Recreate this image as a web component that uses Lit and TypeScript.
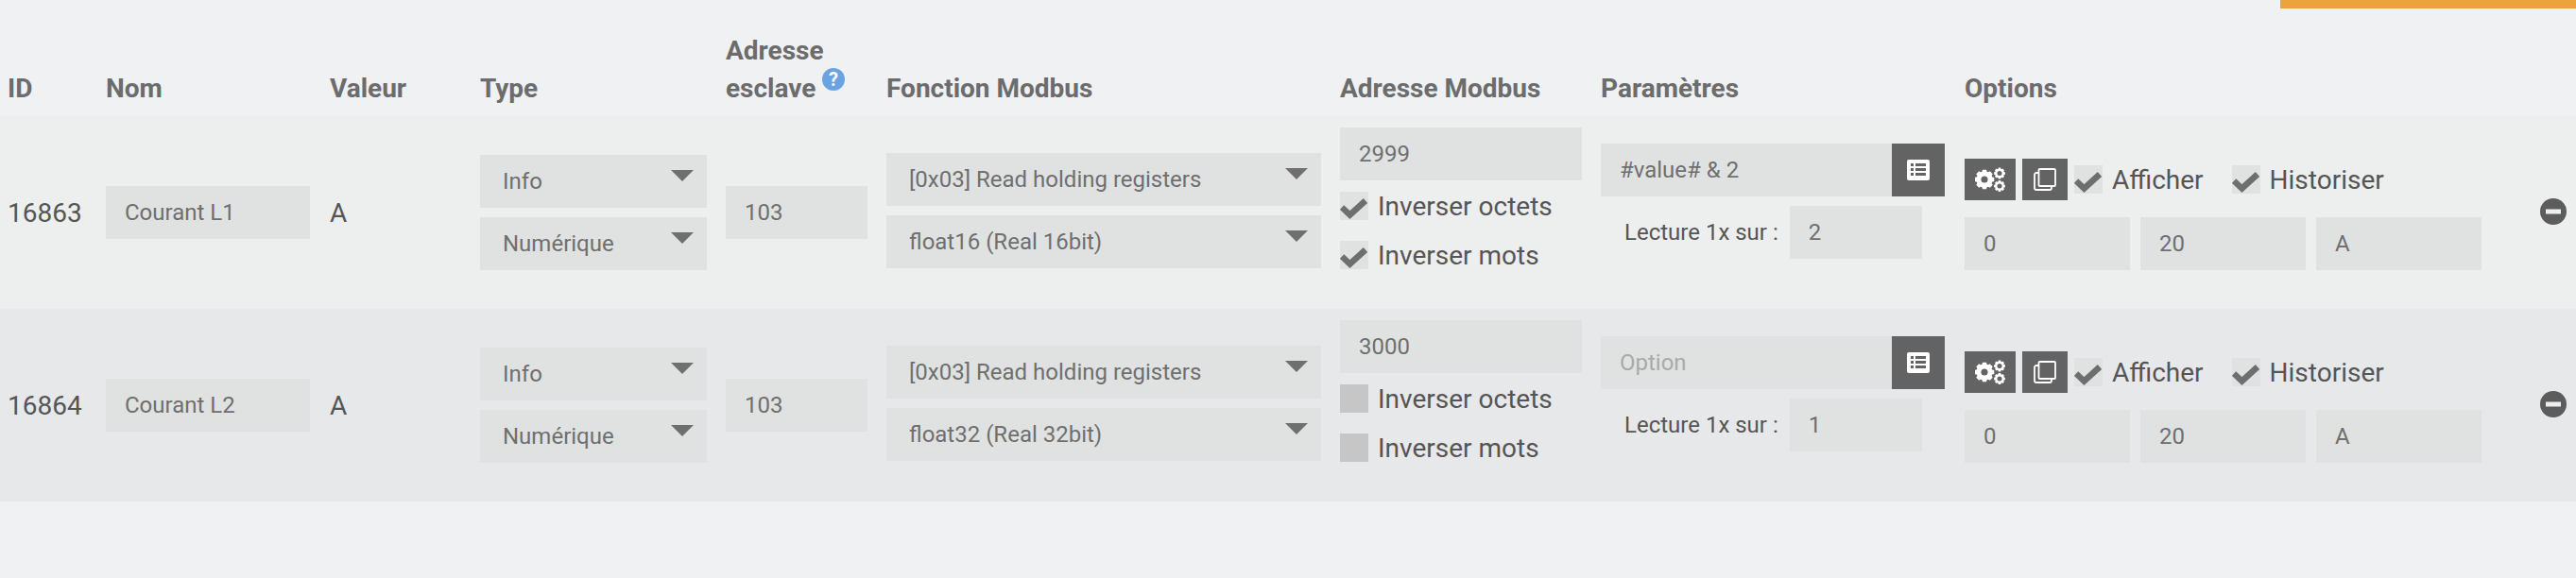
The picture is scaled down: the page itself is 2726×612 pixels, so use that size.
import { LitElement, html, css, svg } from 'lit';
import { customElement } from 'lit/decorators.js';

interface Row {
  id: string;
  name: string;
  func: string;
  format: string;
  addr: string;
  swapBytes: boolean;
  swapWords: boolean;
  param: string;
  readEvery: string;
}

const ROWS: Row[] = [
  { id: '16863', name: 'Courant L1', func: '[0x03] Read holding registers', format: 'float16 (Real 16bit)', addr: '2999', swapBytes: true, swapWords: true, param: '#value# & 2', readEvery: '2' },
  { id: '16864', name: 'Courant L2', func: '[0x03] Read holding registers', format: 'float32 (Real 32bit)', addr: '3000', swapBytes: false, swapWords: false, param: '', readEvery: '1' },
];

const gear = (cx: number, cy: number, r: number, hole: number) => {
  const teeth = 8;
  let d = '';
  for (let i = 0; i < teeth; i++) {
    const a = (i / teeth) * Math.PI * 2;
    const w = Math.PI / teeth / 1.6;
    const pts = [
      [r * 0.82, a - w * 1.25],
      [r, a - w * 0.8],
      [r, a + w * 0.8],
      [r * 0.82, a + w * 1.25],
    ];
    for (const [q, t] of pts) {
      d += `${d ? 'L' : 'M'}${(cx + q * Math.cos(t)).toFixed(2)} ${(cy + q * Math.sin(t)).toFixed(2)}`;
    }
  }
  const h = r * hole;
  d += `ZM${cx - h} ${cy}a${h} ${h} 0 1 0 ${2 * h} 0a${h} ${h} 0 1 0 ${-2 * h} 0Z`;
  return svg`<path fill="#fff" fill-rule="evenodd" d=${d}></path>`;
};

const cogsIcon = html`<svg width="32" height="26" viewBox="0 0 32 26">
  ${gear(10, 13, 10.5, 0.34)}${gear(26, 6.5, 6, 0.42)}${gear(26, 20, 6, 0.42)}
</svg>`;

const cloneIcon = html`<svg width="24" height="24" viewBox="0 0 24 24" fill="none" stroke="#fff" stroke-width="1.8">
  <rect x="5.5" y="1" width="17.5" height="18" rx="1"></rect>
  <path d="M5.5 5H3A2 2 0 0 0 1 7V21A2 2 0 0 0 3 23H17A2 2 0 0 0 19 21V19"></path>
</svg>`;

const listIcon = html`<svg width="24" height="22" viewBox="0 0 24 22">
  <rect width="24" height="22" rx="2" fill="#fff"></rect>
  <g fill="#636363">
    <rect x="4" y="4" width="3" height="3"></rect><rect x="9" y="4" width="11" height="3"></rect>
    <rect x="4" y="9" width="3" height="3"></rect><rect x="9" y="9" width="11" height="3"></rect>
    <rect x="4" y="14" width="3" height="3"></rect><rect x="9" y="14" width="11" height="3"></rect>
  </g>
</svg>`;

const checkIcon = html`<svg width="30" height="30" viewBox="0 0 30 30">
  <path d="M2 16.5l8.5 8L27 9.5" fill="none" stroke="#6e6e6e" stroke-width="6.5"></path>
</svg>`;

@customElement('app-root')
export class AppRoot extends LitElement {
  static styles = css`
    :host {
      display: block;
      min-height: 612px;
      background: #eff1f3;
      font-family: Roboto, sans-serif;
      color: #555;
      overflow: hidden;
    }

    .accent {
      height: 9px;
      width: 313px;
      margin-left: auto;
      background: #eca33b;
    }

    .row {
      display: grid;
      grid-template-columns: 104px 237px 159px 260px 170px 480px 276px 385px 609px 46px;
      height: 204px;
      align-items: center;
      font-size: 28px;
    }

    .row > div { padding-left: 8px; }

    .head {
      height: 114px;
      align-items: end;
      font-weight: 700;
      line-height: 40px;
      color: #6c6c6c;
    }

    .head > div { padding-bottom: 9px; }

    .one { background: #edeeee; }
    .two { background: #e7e8ea; }

    .help {
      display: inline-block;
      vertical-align: 7px;
      margin: -6px 0 0 7px;
      width: 24px;
      height: 24px;
    }

    input, select {
      display: block;
      box-sizing: border-box;
      height: 56px;
      border: 0;
      margin: 0;
      border-radius: 0;
      outline: 0;
      background: #e0e2e1;
      color: #6f6f6f;
      font: 24px Roboto, sans-serif;
      padding: 0 20px;
      appearance: none;
    }

    input::placeholder { color: #a9a9a9; opacity: 1; }

    .name { width: 216px; }
    .slave { width: 150px; }

    .stack { display: flex; flex-direction: column; gap: 10px; }
    .stack.types { width: 240px; }
    .stack.funcs { width: 460px; margin-bottom: 4px; }

    .pick { position: relative; }
    .pick select { width: 100%; padding-left: 24px; }
    .pick svg { position: absolute; right: 14px; top: 16px; }

    .addr-cell { padding-bottom: 30px; }
    .addr { width: 256px; }

    .check {
      display: flex;
      align-items: center;
      gap: 10px;
      height: 30px;
    }

    .box {
      flex: none;
      width: 30px;
      height: 30px;
      background: #e0e2e1;
    }
    .box.off { background: #c6c6c6; }
    .box svg { display: block; }

    .checks { display: flex; flex-direction: column; gap: 22px; margin-top: 12px; }

    .params { padding-bottom: 24px; }
    .param-line { display: flex; width: 364px; }
    .param-line input { flex: 1; min-width: 0; }

    .icon-btn {
      flex: none;
      display: flex;
      align-items: center;
      justify-content: center;
      background: #636363;
    }
    .list-btn { width: 56px; height: 56px; }
    .cog-btn { width: 54px; height: 44px; }
    .copy-btn { width: 48px; height: 44px; }

    .read {
      display: flex;
      align-items: center;
      margin-top: 10px;
      padding-left: 25px;
      gap: 12px;
      font-size: 24px;
    }
    .read input { width: 140px; }

    .opts-top { display: flex; align-items: center; gap: 7px; height: 44px; }
    .opts-top .check { margin-right: 23px; }
    .opts-bottom { display: flex; gap: 11px; margin-top: 18px; }
    .opts-bottom input { width: 175px; }
    .opts { margin-top: 4px; }

    .remove { display: block; margin-bottom: 3px; }
  `;

  private arrow() {
    return html`<svg width="24" height="12" viewBox="0 0 24 12"><path d="M0 0h24L12 12z" fill="#6f6f6f"></path></svg>`;
  }

  private pick(value: string) {
    return html`<div class="pick">
      <select><option>${value}</option></select>
      ${this.arrow()}
    </div>`;
  }

  private check(label: string, on: boolean) {
    return html`<div class="check">
      <span class="box ${on ? '' : 'off'}">${on ? checkIcon : ''}</span>${label}
    </div>`;
  }

  private renderRow(r: Row, cls: string) {
    return html`<div class="row ${cls}">
      <div>${r.id}</div>
      <div><input class="name" value=${r.name} /></div>
      <div>A</div>
      <div>
        <div class="stack types">${this.pick('Info')}${this.pick('Numérique')}</div>
      </div>
      <div><input class="slave" value="103" /></div>
      <div>
        <div class="stack funcs">${this.pick(r.func)}${this.pick(r.format)}</div>
      </div>
      <div class="addr-cell">
        <input class="addr" value=${r.addr} />
        <div class="checks">
          ${this.check('Inverser octets', r.swapBytes)}
          ${this.check('Inverser mots', r.swapWords)}
        </div>
      </div>
      <div class="params">
        <div class="param-line">
          <input value=${r.param} placeholder="Option" />
          <span class="icon-btn list-btn">${listIcon}</span>
        </div>
        <div class="read">Lecture 1x sur : <input value=${r.readEvery} /></div>
      </div>
      <div class="opts">
        <div class="opts-top">
          <span class="icon-btn cog-btn">${cogsIcon}</span>
          <span class="icon-btn copy-btn">${cloneIcon}</span>
          ${this.check('Afficher', true)}
          ${this.check('Historiser', true)}
        </div>
        <div class="opts-bottom">
          <input value="0" /><input value="20" /><input value="A" />
        </div>
      </div>
      <div>
        <svg class="remove" width="28" height="28" viewBox="0 0 28 28">
          <circle cx="14" cy="14" r="14" fill="#5c5c5c"></circle>
          <rect x="6" y="11.5" width="16" height="5" fill="#eee"></rect>
        </svg>
      </div>
    </div>`;
  }

  render() {
    return html`
      <div class="accent"></div>
      <div class="row head">
        <div>ID</div>
        <div>Nom</div>
        <div>Valeur</div>
        <div>Type</div>
        <div>Adresse<br />esclave<svg class="help" viewBox="0 0 24 24">
          <circle cx="12" cy="12" r="12" fill="#6aa3e2"></circle>
          <text x="12" y="19" text-anchor="middle" font-size="20" font-weight="700" fill="#fff">?</text>
        </svg></div>
        <div>Fonction Modbus</div>
        <div>Adresse Modbus</div>
        <div>Paramètres</div>
        <div>Options</div>
        <div></div>
      </div>
      ${ROWS.map((r, i) => this.renderRow(r, i === 0 ? 'one' : 'two'))}
    `;
  }
}
